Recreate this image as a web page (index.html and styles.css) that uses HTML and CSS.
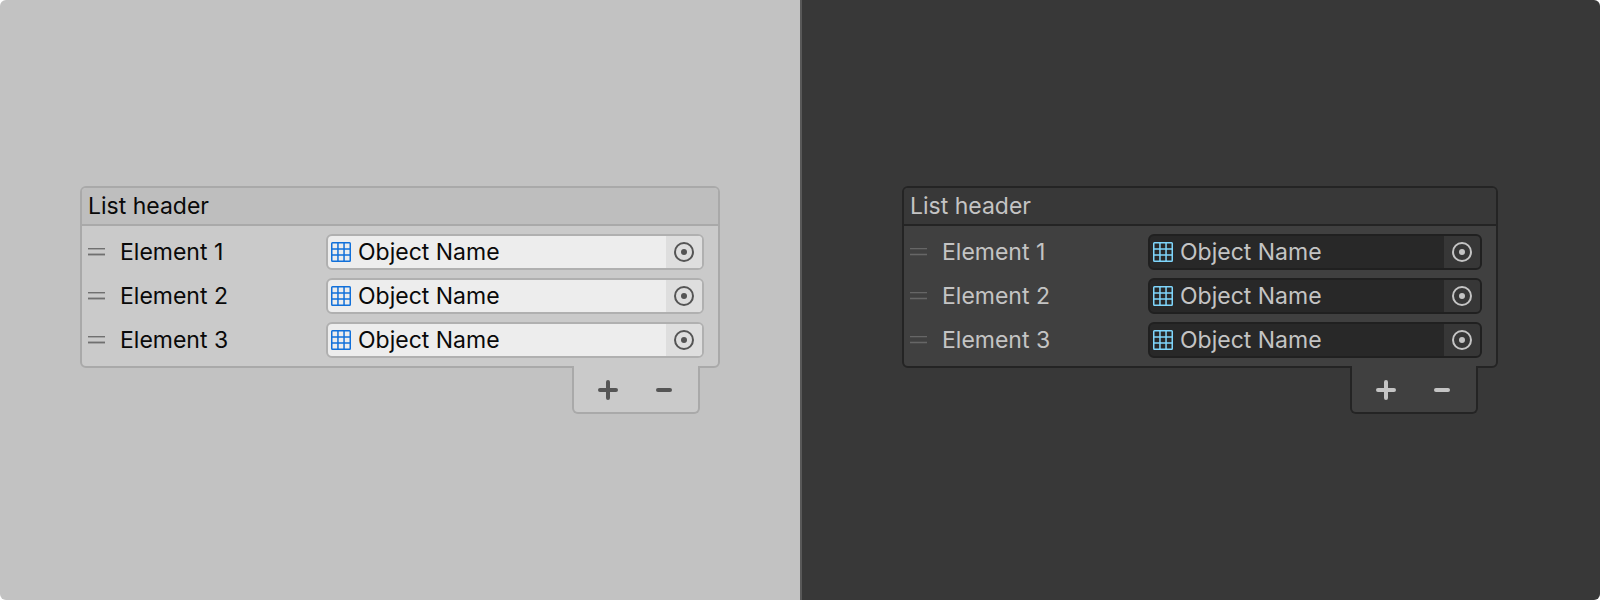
FILE: index.html
```html
<!DOCTYPE html>
<html lang="en">
<head>
  <meta charset="UTF-8" />
  <meta name="viewport" content="width=device-width, initial-scale=1" />
  <title>List view</title>
  <link rel="stylesheet" href="styles.css">
</head>
<body>

  <!-- Shared icons -->
  <svg class="icon-defs" aria-hidden="true">
    <symbol id="icon-handle" viewBox="0 0 18 10">
      <path class="handle-line" d="M0 1.5h17M0 7.5h17" />
      <path class="handle-shade" d="M0 2.5h17M0 6.5h17M0 8.5h17" />
    </symbol>
    <symbol id="icon-grid" viewBox="0 0 20 20">
      <path class="grid-fill" d="M1.5 0h17a1.5 1.5 0 0 1 1.5 1.5v17a1.5 1.5 0 0 1-1.5 1.5h-17a1.5 1.5 0 0 1-1.5-1.5v-17a1.5 1.5 0 0 1 1.5-1.5zM1.5 1.5v4.7h4.7v-4.7zM7.7 1.5v4.7h4.6v-4.7zM13.8 1.5v4.7h4.7v-4.7zM1.5 7.7v4.6h4.7v-4.6zM7.7 7.7v4.6h4.6v-4.6zM13.8 7.7v4.6h4.7v-4.6zM1.5 13.8v4.7h4.7v-4.7zM7.7 13.8v4.7h4.6v-4.7zM13.8 13.8v4.7h4.7v-4.7z" fill-rule="evenodd" />
    </symbol>
    <symbol id="icon-target" viewBox="0 0 20 20">
      <circle cx="10" cy="10" r="9" fill="none" stroke="currentColor" stroke-width="2" />
      <circle cx="10" cy="10" r="3" fill="currentColor" />
    </symbol>
    <symbol id="icon-plus" viewBox="0 0 20 20">
      <path d="M10 2v16M2 10h16" fill="none" stroke="currentColor" stroke-width="4" stroke-linecap="round" />
    </symbol>
    <symbol id="icon-minus" viewBox="0 0 20 20">
      <path d="M4 10h12" fill="none" stroke="currentColor" stroke-width="4" stroke-linecap="round" />
    </symbol>
  </svg>

  <main class="themes">
    <section class="theme light" aria-label="Light theme">
      <div class="list">
        <h2 class="list-header">List header</h2>
        <ul class="list-body">
          <li class="row">
            <svg class="handle" aria-hidden="true"><use href="#icon-handle" /></svg>
            <label for="light-1">Element 1</label>
            <div class="field">
              <svg class="icon grid" aria-hidden="true"><use href="#icon-grid" /></svg>
              <input id="light-1" type="text" value="Object Name" />
              <button class="pick" type="button" aria-label="Select object"><svg class="icon"><use href="#icon-target" /></svg></button>
            </div>
          </li>
          <li class="row">
            <svg class="handle" aria-hidden="true"><use href="#icon-handle" /></svg>
            <label for="light-2">Element 2</label>
            <div class="field">
              <svg class="icon grid" aria-hidden="true"><use href="#icon-grid" /></svg>
              <input id="light-2" type="text" value="Object Name" />
              <button class="pick" type="button" aria-label="Select object"><svg class="icon"><use href="#icon-target" /></svg></button>
            </div>
          </li>
          <li class="row">
            <svg class="handle" aria-hidden="true"><use href="#icon-handle" /></svg>
            <label for="light-3">Element 3</label>
            <div class="field">
              <svg class="icon grid" aria-hidden="true"><use href="#icon-grid" /></svg>
              <input id="light-3" type="text" value="Object Name" />
              <button class="pick" type="button" aria-label="Select object"><svg class="icon"><use href="#icon-target" /></svg></button>
            </div>
          </li>
        </ul>
      </div>
      <div class="list-footer">
        <button type="button" aria-label="Add element"><svg class="icon"><use href="#icon-plus" /></svg></button>
        <button type="button" aria-label="Remove element"><svg class="icon"><use href="#icon-minus" /></svg></button>
      </div>
    </section>

    <section class="theme dark" aria-label="Dark theme">
      <div class="list">
        <h2 class="list-header">List header</h2>
        <ul class="list-body">
          <li class="row">
            <svg class="handle" aria-hidden="true"><use href="#icon-handle" /></svg>
            <label for="dark-1">Element 1</label>
            <div class="field">
              <svg class="icon grid" aria-hidden="true"><use href="#icon-grid" /></svg>
              <input id="dark-1" type="text" value="Object Name" />
              <button class="pick" type="button" aria-label="Select object"><svg class="icon"><use href="#icon-target" /></svg></button>
            </div>
          </li>
          <li class="row">
            <svg class="handle" aria-hidden="true"><use href="#icon-handle" /></svg>
            <label for="dark-2">Element 2</label>
            <div class="field">
              <svg class="icon grid" aria-hidden="true"><use href="#icon-grid" /></svg>
              <input id="dark-2" type="text" value="Object Name" />
              <button class="pick" type="button" aria-label="Select object"><svg class="icon"><use href="#icon-target" /></svg></button>
            </div>
          </li>
          <li class="row">
            <svg class="handle" aria-hidden="true"><use href="#icon-handle" /></svg>
            <label for="dark-3">Element 3</label>
            <div class="field">
              <svg class="icon grid" aria-hidden="true"><use href="#icon-grid" /></svg>
              <input id="dark-3" type="text" value="Object Name" />
              <button class="pick" type="button" aria-label="Select object"><svg class="icon"><use href="#icon-target" /></svg></button>
            </div>
          </li>
        </ul>
      </div>
      <div class="list-footer">
        <button type="button" aria-label="Add element"><svg class="icon"><use href="#icon-plus" /></svg></button>
        <button type="button" aria-label="Remove element"><svg class="icon"><use href="#icon-minus" /></svg></button>
      </div>
    </section>
  </main>

</body>
</html>
```

FILE: styles.css
```css
* {
  box-sizing: border-box;
}
body {
  margin: 0;
  font-family: Inter, "Liberation Sans", sans-serif;
  font-size: 23px;
  line-height: 32px;
  background: #fff;
}

.icon-defs {
  display: none;
}

/* Two themes side by side */
.themes {
  display: grid;
  grid-template-columns: repeat(2, minmax(0, 1fr));
  min-height: 100vh;
  border-radius: 6px;
  overflow: hidden;
}
.theme {
  display: flex;
  flex-direction: column;
  justify-content: center;
  padding: 40px 80px;
  background: var(--window);
  color: var(--text);
}

.light {
  --window: #c2c2c2;
  --text: #090909;
  --border: #a9a9a9;
  --header: #bebebe;
  --list: #cacaca;
  --field: #ededed;
  --field-border: #b0b0b0;
  --pick: #dedede;
  --icon: #555;
  --grid: #1170da;
  --handle: #707070;
  --handle-shade: #a4a4a4;
}
.dark {
  --window: #383838;
  --text: #c4c4c4;
  --border: #242424;
  --header: #383838;
  --list: #404040;
  --field: #282828;
  --field-border: #202020;
  --pick: #373737;
  --icon: #c4c4c4;
  --grid: #7fd6fc;
  --handle: #666;
  --handle-shade: #4a4a4a;
  padding: 40px 102px 40px 100px;
  border-left: 2px solid #585858;
}

/* List */
.list {
  border: 2px solid var(--border);
  border-radius: 6px;
  background: var(--list);
}
.list-header {
  margin: 0;
  padding: 2px 6px;
  font: inherit;
  background: var(--header);
  border-bottom: 2px solid var(--border);
  border-radius: 4px 4px 0 0;
}
.list-body {
  display: flex;
  flex-direction: column;
  gap: 8px;
  margin: 0;
  padding: 8px 14px 8px 6px;
  list-style: none;
}
.row {
  display: flex;
  align-items: center;
}
.row label {
  width: 206px;
  flex-shrink: 0;
}
.handle {
  width: 18px;
  height: 10px;
  margin-right: 14px;
  flex-shrink: 0;
}
.handle-line {
  stroke: var(--handle);
}
.handle-shade {
  stroke: var(--handle-shade);
}

/* Object field */
.field {
  display: flex;
  align-items: center;
  flex: 1;
  min-width: 0;
  height: 36px;
  padding-left: 3px;
  background: var(--field);
  border: 2px solid var(--field-border);
  border-radius: 6px;
  overflow: hidden;
}
.field input {
  flex: 1;
  min-width: 0;
  height: 32px;
  padding: 0 0 0 7px;
  border: none;
  outline: none;
  background: none;
  color: inherit;
  font: inherit;
}
.icon {
  display: block;
  width: 20px;
  height: 20px;
  flex-shrink: 0;
}
.grid-fill {
  fill: var(--grid);
}

button {
  display: flex;
  align-items: center;
  justify-content: center;
  padding: 0;
  border: none;
  background: none;
  color: var(--icon);
  cursor: pointer;
}
.pick {
  width: 36px;
  height: 32px;
  background: var(--pick);
}

/* Add / remove tab, covers the bottom border of the list */
.list-footer {
  display: flex;
  align-self: flex-end;
  margin: -2px 20px 0 0;
  padding: 2px 6px 0;
  background: var(--list);
  border: 2px solid var(--border);
  border-top: none;
  border-radius: 0 0 6px 6px;
}
.list-footer button {
  width: 56px;
  height: 44px;
}
```
